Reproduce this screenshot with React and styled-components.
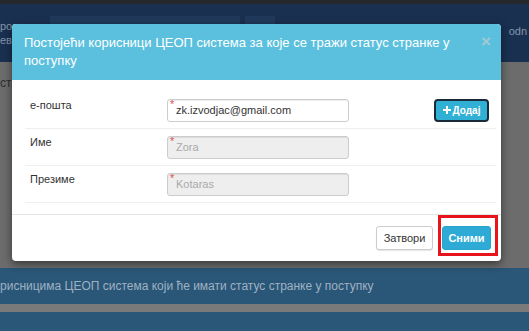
import styled, { createGlobalStyle } from "styled-components";

const Global = createGlobalStyle`
  html, body { margin: 0; padding: 0; }
  body {
    width: 529px;
    height: 331px;
    overflow: hidden;
    font-family: "Liberation Sans", Arial, sans-serif;
  }
`;

const Page = styled.div`
  position: relative;
  width: 529px;
  height: 331px;
  overflow: hidden;
  background: #6c6c6c;
  display: flex;
  flex-direction: column;
`;

const TopStrip = styled.div`
  flex-shrink: 0;
  height: 4px;
  background: #25292e;
`;

const NavBar = styled.div`
  flex-shrink: 0;
  height: 58px;
  background: #1a3050;
  display: flex;
  align-items: flex-start;
  padding-top: 12px;
  box-sizing: border-box;
`;

const NavText = styled.div`
  width: 46px;
  font-size: 11px;
  line-height: 14px;
  color: #8595aa;
  padding-top: 3px;
  white-space: nowrap;
  overflow: hidden;
`;

const NavBox = styled.div`
  width: ${(p) => p.$w}px;
  height: 30px;
  margin-left: ${(p) => p.$ml}px;
  background: #20395b;
`;

const NavRight = styled.div`
  margin-left: auto;
  margin-right: 2px;
  font-size: 11px;
  color: #8595aa;
  padding-top: 9px;
`;

const ContentText = styled.div`
  flex-shrink: 0;
  font-size: 12px;
  color: #2e2e2e;
  padding-top: 14px;
  height: 206px;
  box-sizing: border-box;
`;

const Band = styled.div`
  flex-shrink: 0;
  flex-grow: ${(p) => (p.$fill ? 1 : 0)};
  height: ${(p) => p.$h}px;
  background: #2a5677;
  color: #9fb2c4;
  font-size: 12px;
  display: flex;
  align-items: center;
  white-space: nowrap;
`;

const Gap = styled.div`
  flex-shrink: 0;
  height: 8px;
  background: #7a7a7a;
`;

const Modal = styled.div`
  position: absolute;
  left: 12px;
  top: 24px;
  width: 489px;
  background: #fff;
  border-radius: 4px;
  box-shadow: 0 3px 9px rgba(0, 0, 0, 0.5);
  overflow: hidden;
`;

const Header = styled.div`
  background: #5bc0de;
  padding: 10px 12px;
  display: flex;
  align-items: flex-start;
  height: 56px;
  box-sizing: border-box;
`;

const Title = styled.div`
  flex: 1;
  color: #fff;
  font-size: 13px;
  line-height: 18px;
  padding-right: 12px;
`;

const Close = styled.div`
  color: #a3c9d6;
  font-size: 17px;
  font-weight: bold;
  line-height: 14px;
  margin-top: 1px;
  margin-right: -2px;
`;

const Body = styled.div`
  padding: 12px 5px 11px 13px;
  border-bottom: 1px solid #e5e5e5;
`;

const Row = styled.div`
  display: flex;
  align-items: center;
  height: 37px;
  border-bottom: 1px solid #eee;
  padding-left: 5px;
  box-sizing: border-box;
`;

const Label = styled.div`
  width: 137px;
  font-size: 11px;
  color: #333;
  align-self: flex-start;
  padding-top: 7px;
`;

const InputWrap = styled.div`
  position: relative;
  width: 182px;
  height: 23px;
  border: 1px solid #ccc;
  border-radius: 3px;
  box-sizing: border-box;
  background: ${(p) => (p.$disabled ? "#eeeeee" : "#fff")};
  display: flex;
  align-items: center;
  padding-left: 8px;
  font-size: 11px;
  color: ${(p) => (p.$disabled ? "#aaa" : "#333")};
  box-shadow: inset 0 1px 1px rgba(0, 0, 0, 0.075);
`;

const Star = styled.span`
  position: absolute;
  left: 2px;
  top: -1px;
  color: #d9534f;
  font-size: 11px;
  line-height: 11px;
`;

const AddButton = styled.button`
  margin-left: auto;
  margin-right: 7px;
  width: 55px;
  height: 23px;
  border: 2px solid #1b2a38;
  border-radius: 4px;
  background: #31b0d5;
  color: #fff;
  font-family: "Liberation Sans", Arial, sans-serif;
  font-size: 10px;
  font-weight: bold;
  display: flex;
  align-items: center;
  justify-content: center;
  gap: 2px;
  padding: 0;
`;

const Footer = styled.div`
  display: flex;
  justify-content: flex-end;
  gap: 9px;
  padding: 11px 10px 11px 0;
`;

const Button = styled.button`
  position: relative;
  height: 24px;
  width: ${(p) => p.$w}px;
  border-radius: 3px;
  font-family: "Liberation Sans", Arial, sans-serif;
  font-size: 11px;
  padding: 0;
  border: 1px solid ${(p) => (p.$primary ? "#28a4c9" : "#ccc")};
  background: ${(p) => (p.$primary ? "#2eaad6" : "#fff")};
  color: ${(p) => (p.$primary ? "#fff" : "#333")};
  font-weight: ${(p) => (p.$primary ? "bold" : "normal")};
  box-shadow: ${(p) => (p.$primary ? "none" : "0 1px 1px rgba(0,0,0,0.1)")};
`;

const Highlight = styled.div`
  position: absolute;
  left: -5px;
  top: -12px;
  right: -8px;
  bottom: -7px;
  border: 3px solid #e8141c;
  pointer-events: none;
`;

const fields = [
  { label: "е-пошта", value: "zk.izvodjac@gmail.com", add: true },
  { label: "Име", value: "Zora", disabled: true },
  { label: "Презиме", value: "Kotaras", disabled: true },
];

const Plus = () => (
  <svg width="8" height="8" viewBox="0 0 8 8">
    <path d="M3 0h2v3h3v2H5v3H3V5H0V3h3z" fill="#fff" />
  </svg>
);

export default function App() {
  return (
    <>
      <Global />
      <Page>
        <TopStrip />
        <NavBar>
          <NavText>
            роисто
            <br />
            ев-
          </NavText>
          <NavBox $w={190} $ml={4} />
          <NavBox $w={30} $ml={5} />
          <NavRight>odn</NavRight>
        </NavBar>
        <ContentText>ста</ContentText>
        <Band $h={36}>рисницима ЦЕОП система који ће имати статус странке у поступку</Band>
        <Gap />
        <Band $h={19} $fill />

        <Modal>
          <Header>
            <Title>Постојећи корисници ЦЕОП система за које се тражи статус странке у поступку</Title>
            <Close>×</Close>
          </Header>
          <Body>
            {fields.map((f) => (
              <Row key={f.label}>
                <Label>{f.label}</Label>
                <InputWrap $disabled={f.disabled}>
                  <Star>*</Star>
                  {f.value}
                </InputWrap>
                {f.add && (
                  <AddButton>
                    <Plus />
                    Додај
                  </AddButton>
                )}
              </Row>
            ))}
          </Body>
          <Footer>
            <Button $w={57}>Затвори</Button>
            <Button $w={49} $primary>
              Сними
              <Highlight />
            </Button>
          </Footer>
        </Modal>
      </Page>
    </>
  );
}
